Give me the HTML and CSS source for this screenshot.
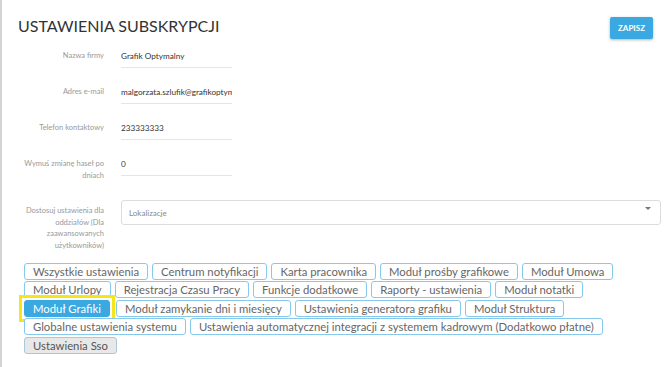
FILE: index.html
```html
<!DOCTYPE html>
<html lang="pl">
<head>
<meta charset="utf-8">
<title>Ustawienia subskrypcji</title>
<link rel="stylesheet" href="styles.css">
</head>
<body>
<div class="page">
  <header class="head">
    <h1 class="title">USTAWIENIA SUBSKRYPCJI</h1>
    <button class="save" type="button">ZAPISZ</button>
  </header>

  <div class="form">
    <div class="row">
      <div class="label">Nazwa firmy</div>
      <div class="field"><div class="input">Grafik Optymalny</div></div>
    </div>
    <div class="row">
      <div class="label">Adres e-mail</div>
      <div class="field"><div class="input">malgorzata.szlufik@grafikoptymalny.pl</div></div>
    </div>
    <div class="row">
      <div class="label">Telefon kontaktowy</div>
      <div class="field"><div class="input">233333333</div></div>
    </div>
    <div class="row">
      <div class="label">Wymuś zmianę haseł po dniach</div>
      <div class="field"><div class="input">0</div></div>
    </div>
    <div class="row row-select">
      <div class="label">Dostosuj ustawienia dla oddziałów (Dla zaawansowanych użytkowników)</div>
      <div class="field field-wide">
        <div class="select">
          <span class="placeholder">Lokalizacje</span>
          <span class="caret"></span>
        </div>
      </div>
    </div>
  </div>

  <div class="modules">
    <button class="mod" type="button">Wszystkie ustawienia</button>
    <button class="mod" type="button">Centrum notyfikacji</button>
    <button class="mod" type="button">Karta pracownika</button>
    <button class="mod" type="button">Moduł prośby grafikowe</button>
    <button class="mod" type="button">Moduł Umowa</button>
    <button class="mod" type="button">Moduł Urlopy</button>
    <button class="mod" type="button">Rejestracja Czasu Pracy</button>
    <button class="mod" type="button">Funkcje dodatkowe</button>
    <button class="mod" type="button">Raporty - ustawienia</button>
    <button class="mod" type="button">Moduł notatki</button>
    <button class="mod mod-active" type="button">Moduł Grafiki</button>
    <button class="mod" type="button">Moduł zamykanie dni i miesięcy</button>
    <button class="mod" type="button">Ustawienia generatora grafiku</button>
    <button class="mod" type="button">Moduł Struktura</button>
    <button class="mod" type="button">Globalne ustawienia systemu</button>
    <button class="mod" type="button">Ustawienia automatycznej integracji z systemem kadrowym (Dodatkowo płatne)</button>
    <button class="mod mod-gray" type="button">Ustawienia Sso</button>
  </div>
</div>
</body>
</html>
```

FILE: styles.css
```css
html, body {
  margin: 0;
  padding: 0;
  background: #fff;
}

body {
  font-family: Lato, "Open Sans", sans-serif;
  color: #333;
}

.page {
  border-left: 2px solid #d4d4d4;
  min-height: 367px;
  box-sizing: border-box;
  padding: 0 9px 0 16px;
}

.head {
  display: flex;
  justify-content: space-between;
  align-items: flex-start;
  padding-top: 15px;
}

.title {
  margin: 0;
  font-size: 16px;
  line-height: 22px;
  font-weight: 400;
  color: #333;
  letter-spacing: 0;
}

.save {
  margin-top: 2px;
  margin-right: 8px;
  width: 43px;
  height: 22px;
  border: 0;
  border-radius: 2px;
  background: #3aa9e1;
  color: #fff;
  font-family: Lato, sans-serif;
  font-weight: 700;
  font-size: 8px;
  padding: 0;
  box-shadow: 0 1px 3px rgba(0, 0, 0, 0.3);
}

.form {
  margin-top: 6px;
}

.row {
  display: grid;
  grid-template-columns: 80px 1fr;
  column-gap: 17px;
  margin-left: 6px;
  margin-bottom: 13px;
}

.label {
  text-align: right;
  font-size: 7.5px;
  line-height: 12px;
  color: #999;
  padding-top: 5px;
}

.field {
  width: 111px;
}

.field-wide {
  width: 540px;
}

.input {
  height: 22px;
  line-height: 22px;
  font-size: 8.2px;
  color: #333;
  border-bottom: 1px solid #e6e6e6;
  white-space: nowrap;
  overflow: hidden;
}

.row-select {
  margin-top: 18px;
  margin-bottom: 11px;
}

.row-select .label {
  padding-top: 5px;
  line-height: 11.7px;
}

.select {
  position: relative;
  height: 25px;
  box-sizing: border-box;
  border: 1px solid #dcdcdc;
  border-radius: 3px;
  display: flex;
  align-items: center;
  padding: 0 7px;
}

.placeholder {
  font-size: 8px;
  color: #8a8a8a;
  padding-top: 1px;
}

.caret {
  position: absolute;
  right: 9px;
  top: 6px;
  width: 0;
  height: 0;
  border-left: 3px solid transparent;
  border-right: 3px solid transparent;
  border-top: 3px solid #777;
}

.modules {
  display: flex;
  flex-wrap: wrap;
  gap: 1.5px 4px;
  margin-left: 6px;
  margin-right: 40px;
}

.mod {
  position: relative;
  height: 17px;
  padding: 0 8px;
  border: 1px solid #86c9ec;
  border-radius: 3px;
  background: #fff;
  color: #666;
  font-family: Lato, sans-serif;
  font-size: 11.3px;
  line-height: 15px;
  white-space: nowrap;
}

.mod-active {
  background: #3aa9e1;
  border-color: #3aa9e1;
  color: #fff;
  margin-right: 2px;
}

.mod-active::after {
  content: "";
  position: absolute;
  left: -6px;
  right: -6px;
  top: -6px;
  bottom: -6px;
  border: 3px solid #f7e51b;
  pointer-events: none;
}

.mod-gray {
  background: #e8e8e8;
  border-color: #a9c8da;
  color: #555;
}
```
